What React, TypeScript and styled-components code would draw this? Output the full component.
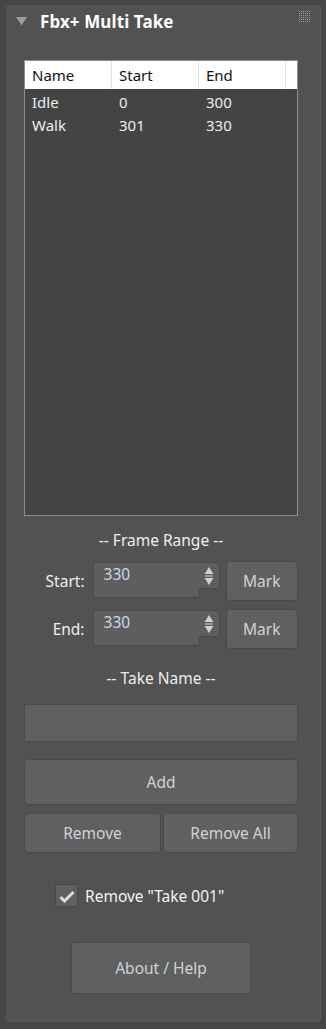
import React from "react";
import styled, { createGlobalStyle } from "styled-components";

const Global = createGlobalStyle`
  html, body { margin: 0; padding: 0; background: #464646; }
  body { font-family: "Noto Sans", "Open Sans", sans-serif; }
  * { box-sizing: border-box; }
`;

const Page = styled.div`
  width: 326px;
  height: 1029px;
  padding: 5px 0 0 6px;
  background: #464646;
`;

const Panel = styled.div`
  width: 315px;
  height: 1017px;
  background: #525252;
  border-radius: 3px;
  border-right: 1px solid #5c5c5c;
  border-bottom: 1px solid #5c5c5c;
  display: flex;
  flex-direction: column;
`;

const TitleBar = styled.div`
  height: 32px;
  display: flex;
  align-items: center;
  padding: 0 9px 0 10px;
`;

const Title = styled.div`
  flex: 1;
  margin-left: 13px;
  color: #ffffff;
  font-weight: 700;
  font-size: 17px;
  letter-spacing: 0.1px;
`;

const Body = styled.div`
  display: flex;
  flex-direction: column;
  padding: 0 22px 0 18px;
`;

const List = styled.div`
  margin-top: 23px;
  height: 456px;
  border: 1px solid #8a8d93;
  background: #444444;
`;

const HeaderRow = styled.div`
  display: grid;
  grid-template-columns: 87px 87px 87px 1fr;
  height: 28px;
  background: #ffffff;
`;

const HeaderCell = styled.div`
  border-right: 1px solid #e2e2e2;
  color: #111;
  font-size: 15px;
  padding-left: 7px;
  display: flex;
  align-items: center;
  &:last-child { border-right: none; }
`;

const DataRow = styled.div`
  display: grid;
  grid-template-columns: 87px 87px 87px 1fr;
  height: 23px;
`;

const DataCell = styled.div`
  color: #eeeeee;
  font-size: 15px;
  padding-left: 7px;
  display: flex;
  align-items: center;
`;

const Rows = styled.div`
  padding-top: 1px;
`;

const SectionLabel = styled.div<{ $mt: number }>`
  margin-top: ${(p) => p.$mt}px;
  height: 20px;
  line-height: 20px;
  text-align: center;
  color: #eeeeee;
  font-size: 15.5px;
`;

const RangeRow = styled.div<{ $mt: number }>`
  margin-top: ${(p) => p.$mt}px;
  height: 40px;
  display: flex;
  align-items: flex-start;
`;

const RangeLabel = styled.div`
  width: 61px;
  text-align: right;
  color: #eeeeee;
  font-size: 15.5px;
  line-height: 20px;
  padding-top: 10px;
`;

const Spinner = styled.div`
  margin-left: 8px;
  margin-top: 1px;
  display: flex;
  align-items: flex-start;
`;

const SpinField = styled.div`
  width: 107px;
  height: 36px;
  background: #5e5e5e;
  border: 1px solid #484848;
  border-right: none;
  color: #c9d9ea;
  font-size: 15.5px;
  padding: 1px 0 0 10px;
  line-height: 20px;
  position: relative;
  &::after {
    content: "";
    position: absolute;
    right: 0;
    top: 26px;
    bottom: -1px;
    width: 1px;
    background: #484848;
  }
`;

const SpinArrows = styled.div`
  width: 20px;
  height: 27px;
  background: #5e5e5e;
  border: 1px solid #484848;
  border-left: none;
  display: flex;
  align-items: center;
  justify-content: center;
`;

const Button = styled.button<{ $h: number; $mt?: number; $w?: string }>`
  height: ${(p) => p.$h}px;
  width: ${(p) => p.$w ?? "100%"};
  margin-top: ${(p) => p.$mt ?? 0}px;
  background: #606060;
  border: 1px solid #4a4a4a;
  border-radius: 4px;
  color: #ccd3da;
  font-family: "Noto Sans", "Open Sans", sans-serif;
  font-size: 15.5px;
  padding: 0;
  cursor: pointer;
`;

const MarkButton = styled(Button)`
  width: 73px;
  margin-left: 6px;
`;

const TextInput = styled.div`
  margin-top: 16px;
  height: 38px;
  background: #5f5f5f;
  border: 1px solid #4a4a4a;
`;

const SplitRow = styled.div`
  margin-top: 8px;
  display: grid;
  grid-template-columns: 137px 1fr;
  gap: 2px;
`;

const CheckRow = styled.div`
  margin-top: 31px;
  height: 23px;
  padding-left: 31px;
  display: flex;
  align-items: center;
  gap: 7px;
`;

const CheckBox = styled.div`
  width: 23px;
  height: 23px;
  background: #606060;
  border: 1px solid #484848;
  display: flex;
  align-items: center;
  justify-content: center;
`;

const CheckLabel = styled.div`
  color: #f2f2f2;
  font-size: 15.5px;
`;

const AboutWrap = styled.div`
  margin-top: 35px;
  display: flex;
  justify-content: center;
`;

const Grip = () => {
  const dots = [];
  for (let r = 0; r < 6; r++)
    for (let c = 0; c < 6; c++)
      dots.push(<rect key={`${r}-${c}`} x={c * 2} y={r * 2} width={1} height={1} fill="#9a9a9a" />);
  return (
    <svg width="12" height="12" viewBox="0 0 12 12" style={{ marginTop: -8 }}>
      {dots}
    </svg>
  );
};

const Triangle = () => (
  <svg width="11" height="9" viewBox="0 0 11 9">
    <polygon points="0,0 11,0 5.5,8.5" fill="#9c9c9c" />
  </svg>
);

const Arrows = () => (
  <svg width="10" height="18" viewBox="0 0 10 18">
    <polygon points="5,0 9.5,7 0.5,7" fill="#cfcfcf" />
    <rect x="1" y="8.5" width="8" height="1" fill="#cfcfcf" />
    <polygon points="0.5,11 9.5,11 5,18" fill="#cfcfcf" />
  </svg>
);

const Check = () => (
  <svg width="16" height="14" viewBox="0 0 16 14">
    <path d="M1.5 8 L5.5 12 L14.5 3" stroke="#dcdcdc" strokeWidth="3" fill="none" />
  </svg>
);

const takes = [
  { name: "Idle", start: "0", end: "300" },
  { name: "Walk", start: "301", end: "330" },
];

export default function App() {
  return (
    <Page>
      <Global />
      <Panel>
        <TitleBar>
          <Triangle />
          <Title>Fbx+ Multi Take</Title>
          <Grip />
        </TitleBar>
        <Body>
          <List>
            <HeaderRow>
              <HeaderCell>Name</HeaderCell>
              <HeaderCell>Start</HeaderCell>
              <HeaderCell>End</HeaderCell>
              <HeaderCell />
            </HeaderRow>
            <Rows>
              {takes.map((t) => (
                <DataRow key={t.name}>
                  <DataCell>{t.name}</DataCell>
                  <DataCell>{t.start}</DataCell>
                  <DataCell>{t.end}</DataCell>
                  <DataCell />
                </DataRow>
              ))}
            </Rows>
          </List>
          <SectionLabel $mt={14}>-- Frame Range --</SectionLabel>
          <RangeRow $mt={11}>
            <RangeLabel>Start:</RangeLabel>
            <Spinner>
              <SpinField>330</SpinField>
              <SpinArrows><Arrows /></SpinArrows>
            </Spinner>
            <MarkButton $h={40}>Mark</MarkButton>
          </RangeRow>
          <RangeRow $mt={8}>
            <RangeLabel>End:</RangeLabel>
            <Spinner>
              <SpinField>330</SpinField>
              <SpinArrows><Arrows /></SpinArrows>
            </Spinner>
            <MarkButton $h={40}>Mark</MarkButton>
          </RangeRow>
          <SectionLabel $mt={19}>-- Take Name --</SectionLabel>
          <TextInput />
          <Button $h={46} $mt={17}>Add</Button>
          <SplitRow>
            <Button $h={40}>Remove</Button>
            <Button $h={40}>Remove All</Button>
          </SplitRow>
          <CheckRow>
            <CheckBox><Check /></CheckBox>
            <CheckLabel>Remove "Take 001"</CheckLabel>
          </CheckRow>
          <AboutWrap>
            <Button $h={52} $w="180px">About / Help</Button>
          </AboutWrap>
        </Body>
      </Panel>
    </Page>
  );
}
